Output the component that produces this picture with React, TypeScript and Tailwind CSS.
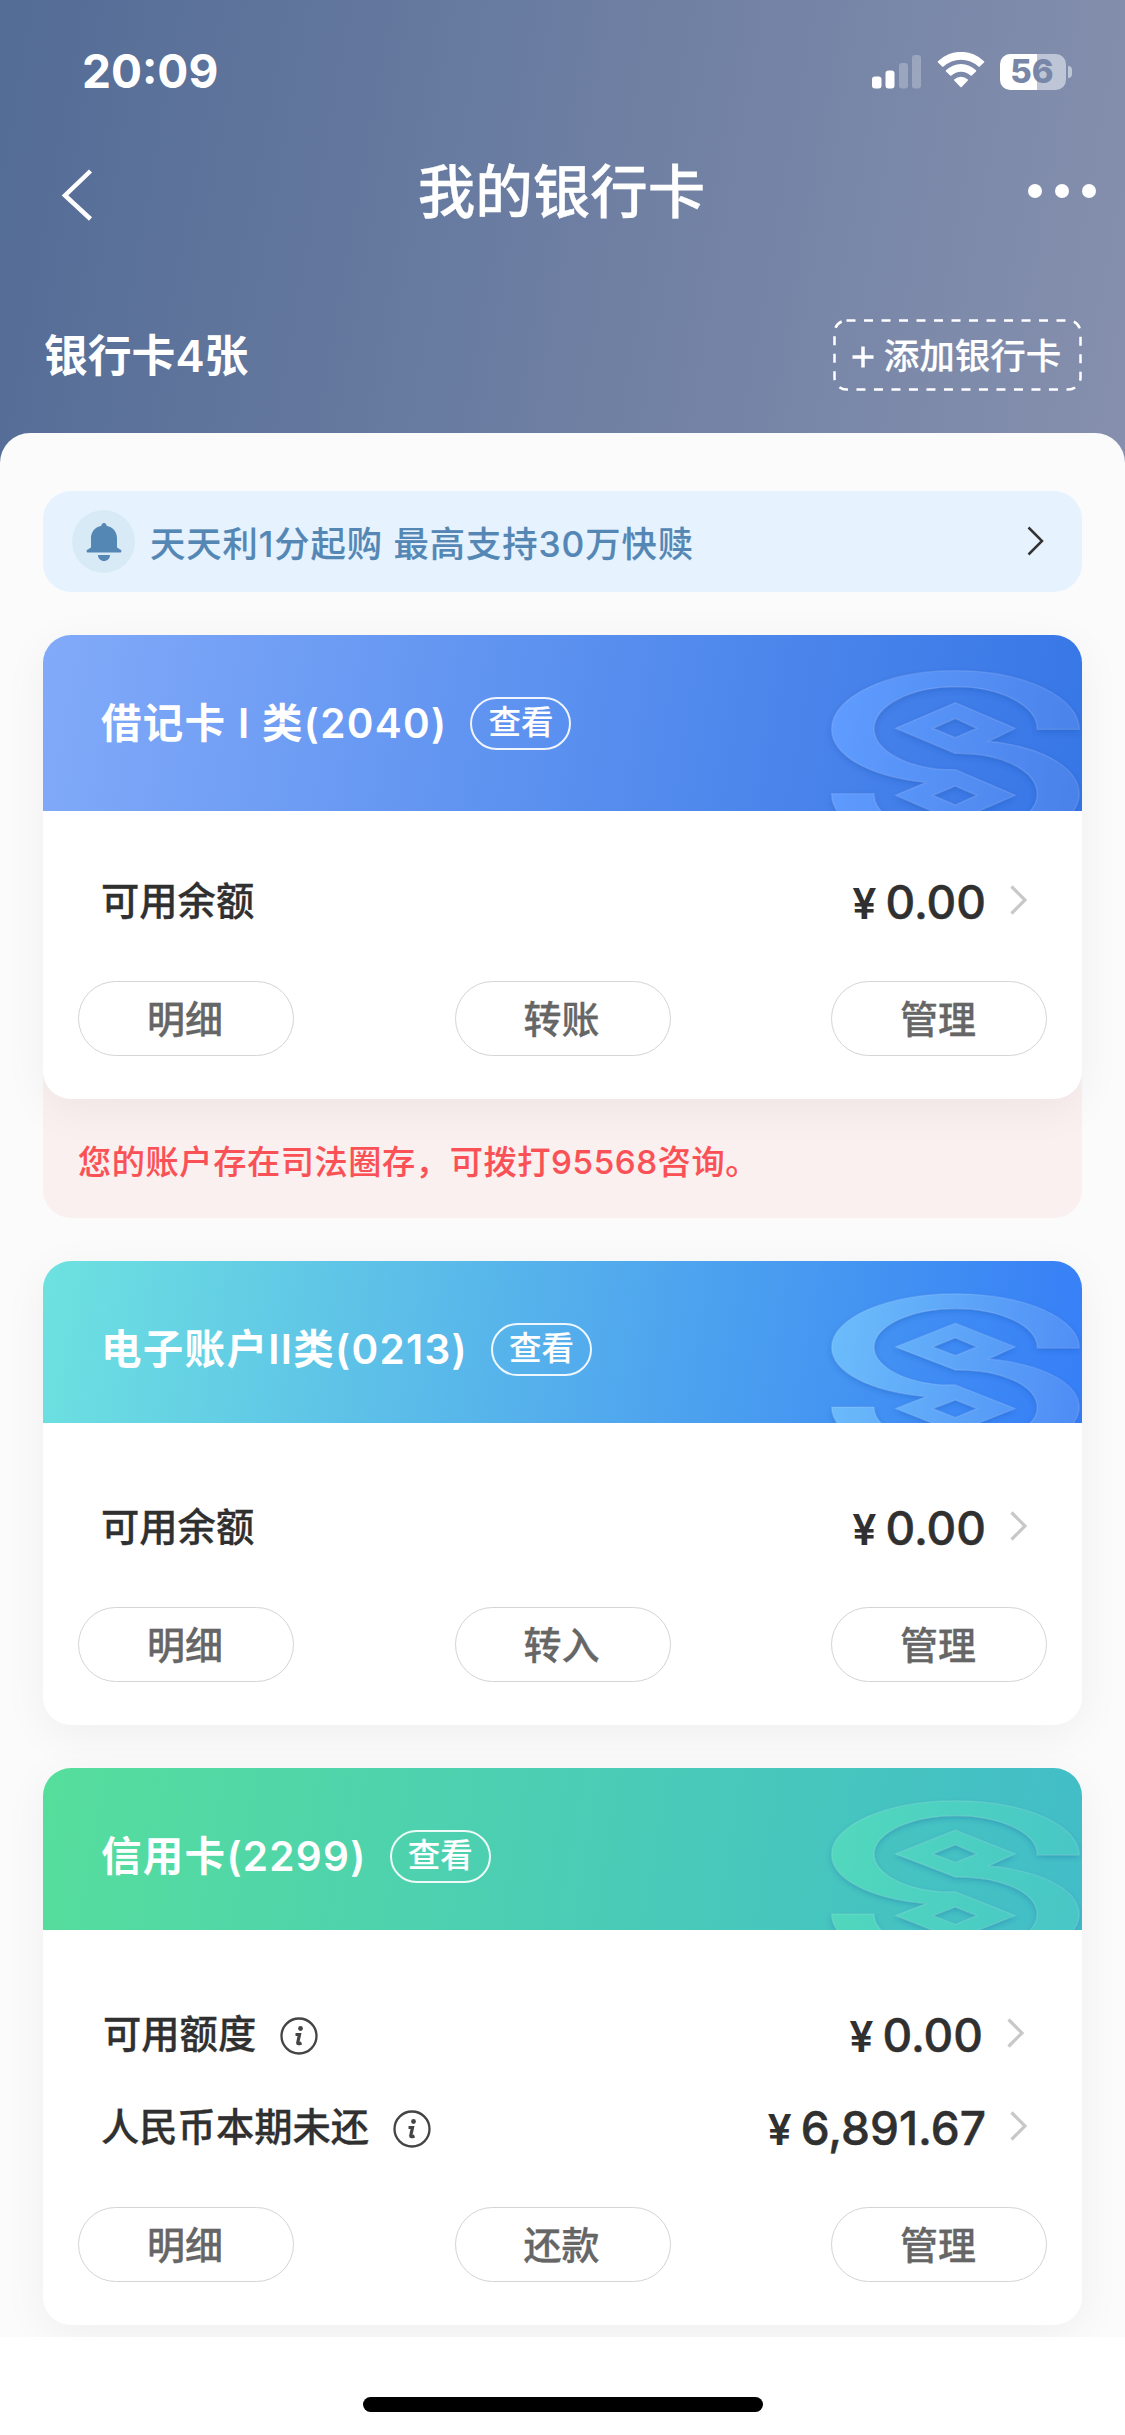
import type { ReactNode } from "react";

type Row = {
  label: string;
  amount: string;
  info?: boolean;
  className?: string;
};

type BankCardProps = {
  id: string;
  title: string;
  headerClass: string;
  bodyClass: string;
  mark: [string, string];
  rows: Row[];
  actions: string[];
};

const CARDS: BankCardProps[] = [
  {
    id: "debit",
    title: "借记卡 I 类(2040)",
    headerClass: "h-[176px] bg-[linear-gradient(100deg,#82aaf9_0%,#5a90ef_50%,#3676e6_100%)]",
    bodyClass: "pt-[44px]",
    mark: ["#5f9cff", "#4a82e9"],
    rows: [{ label: "可用余额", amount: "0.00" }],
    actions: ["明细", "转账", "管理"],
  },
  {
    id: "online",
    title: "电子账户II类(0213)",
    headerClass: "h-[162px] bg-[linear-gradient(100deg,#6de2e0_0%,#54aeec_50%,#367ef7_100%)]",
    bodyClass: "pt-[58px]",
    mark: ["#6bbcfb", "#4f8df5"],
    rows: [{ label: "可用余额", amount: "0.00" }],
    actions: ["明细", "转入", "管理"],
  },
  {
    id: "credit",
    title: "信用卡(2299)",
    headerClass: "h-[162px] bg-[linear-gradient(100deg,#56de9c_0%,#4bcdb5_50%,#42bdc8_100%)]",
    bodyClass: "pt-[58px]",
    mark: ["#52d8bd", "#48c6c6"],
    rows: [
      { label: "可用额度", amount: "0.00", info: true, className: "pl-[2px] pr-[3px]" },
      { label: "人民币本期未还", amount: "6,891.67", info: true },
    ],
    actions: ["明细", "还款", "管理"],
  },
];

function StatusBar() {
  return (
    <div className="flex h-[144px] items-center justify-between pl-[82px] pr-[53px]">
      <span className="-mt-[2px] text-[46px] font-bold leading-none">20:09</span>
      <div className="flex items-center">
        <svg width="50" height="34" viewBox="0 0 50 34" fill="#fff">
          <rect x="0" y="21.5" width="9.5" height="12" rx="3" />
          <rect x="13.5" y="15.5" width="9" height="18" rx="3" />
          <rect x="27" y="8" width="9" height="25.5" rx="3" opacity="0.25" />
          <rect x="40" y="0" width="9" height="33.5" rx="3" opacity="0.25" />
        </svg>
        <svg className="-mt-[4px] ml-[15px]" width="48" height="36" viewBox="0 0 48 36" fill="#fff">
          <path d="M1 9.200a33 33 0 0 1 46 0 .9.900 0 0 1 0 1.300l-4.200 4.100a1 1 0 0 1-1.300 0 25.500 25.500 0 0 0-35 0 1 1 0 0 1-1.300 0L1 10.500a.9.900 0 0 1 0-1.300z" />
          <path d="M9 18.200a21.500 21.500 0 0 1 30 0 .9.900 0 0 1 0 1.300l-4.200 4.100a1 1 0 0 1-1.200 0 14 14 0 0 0-19.200 0 1 1 0 0 1-1.200 0L9 19.500a.9.900 0 0 1 0-1.300z" />
          <path d="M17.200 27.400a10 10 0 0 1 13.600 0 .8.800 0 0 1 0 1.200l-6.200 6.300a.9.900 0 0 1-1.200 0L17.200 28.600a.8.800 0 0 1 0-1.200z" />
        </svg>
        <div className="-mt-[1px] ml-[15px] flex h-[36px] w-[66px] items-center justify-center rounded-[10px] bg-[linear-gradient(90deg,#fff_56%,#bdc5d6_56%)] pr-[2px]">
          <span className="text-[33px] font-extrabold leading-none text-[#7887a8]">56</span>
        </div>
        <div className="ml-[2px] h-[12px] w-[4px] rounded-r-full bg-[#bdc5d6]" />
      </div>
    </div>
  );
}

function Chevron({ className, width = 3.2 }: { className?: string; width?: number }) {
  return (
    <svg
      className={className}
      width="17"
      height="30"
      viewBox="0 0 17 30"
      fill="none"
      stroke="currentColor"
      strokeWidth={width}
    >
      <path d="M1.500 1.500 15 15 1.500 28.500" />
    </svg>
  );
}

function NavBar() {
  return (
    <div className="grid h-[98px] grid-cols-3 items-center">
      <svg className="ml-[61px] mt-[4px]" width="34" height="52" viewBox="0 0 34 52" fill="none" stroke="#fff" strokeWidth="4.500">
        <path d="M29.500 2 4 26.500l25.500 23.500" />
      </svg>
      <h1 className="-ml-[2px] whitespace-nowrap text-center text-[57.500px] font-medium leading-none [-webkit-text-stroke:0.300px]">
        我的银行卡
      </h1>
      <div className="-mt-[5px] flex justify-end gap-[13px] pr-[29px]">
        <i className="size-[14px] rounded-full bg-white" />
        <i className="size-[14px] rounded-full bg-white" />
        <i className="size-[14px] rounded-full bg-white" />
      </div>
    </div>
  );
}

function Summary() {
  return (
    <div className="flex items-center justify-between pl-[44px] pr-[43px] pt-[77px]">
      <span className="mt-[3px] text-[43.800px] font-semibold leading-none">银行卡4张</span>
      <button className="relative flex h-[72px] w-[249px] items-center justify-center gap-[10px] text-[35.500px] font-medium">
        <svg className="absolute inset-0" width="249" height="72" fill="none" stroke="#fff" strokeWidth="2.500">
          <rect x="1.500" y="1.500" width="246" height="69" rx="12" strokeDasharray="9 8.500" />
        </svg>
        <svg className="-ml-[2px] mt-[3px]" width="22" height="22" viewBox="0 0 22 22" stroke="#fff" strokeWidth="3.500">
          <path d="M11 0.500v21M0.500 11h21" />
        </svg>
        <span className="mt-[3px] [-webkit-text-stroke:0.200px]">添加银行卡</span>
      </button>
    </div>
  );
}

function Notice() {
  return (
    <div className="flex h-[101px] items-center rounded-[28px] bg-[#e6f3ff] pl-[29px] pr-[38px] text-[#5587b5]">
      <div className="flex size-[63px] items-center justify-center rounded-full bg-[#d9eaf7]">
        <svg width="36" height="38" viewBox="0 0 36 38" fill="currentColor">
          <path d="M18 0c1.500 0 2.600 1.200 2.600 2.700C26.800 4 31 8.800 31 15v9.500l4 2.600c.6.400.6 2.400-.4 2.400H1.400c-1 0-1-2-.4-2.400l4-2.600V15C5 8.800 9.200 4 15.400 2.700 15.400 1.200 16.500 0 18 0z" />
          <path d="M12 32h12c0 3.500-2.700 6-6 6s-6-2.500-6-6z" />
        </svg>
      </div>
      <span className="ml-[15px] mt-[7px] text-[35.300px] font-medium leading-none tracking-[0.950px] [-webkit-text-stroke:0.150px]">
        天天利1分起购 最高支持30万快赎
      </span>
      <Chevron className="ml-auto mt-[-2px] text-[#333]" width={2.5} />
    </div>
  );
}

// Embossed emblem, stretched to the height of the card header
function Emblem({ id, colors }: { id: string; colors: [string, string] }) {
  const gradient = `mark-${id}`;
  return (
    <svg
      className="absolute right-0 top-0 h-full w-[282px]"
      viewBox="0 14 846 528"
      preserveAspectRatio="none"
    >
      <defs>
        <linearGradient id={gradient} gradientUnits="userSpaceOnUse" x1="95" y1="300" x2="837" y2="420">
          <stop offset="0" stopColor={colors[0]} />
          <stop offset="1" stopColor={colors[1]} />
        </linearGradient>
        <filter id={`${gradient}-shadow`} x="-10%" y="-10%" width="120%" height="120%">
          <feDropShadow dx="0" dy="8" stdDeviation="9" floodColor="#0b3f9a" floodOpacity="0.24" />
        </filter>
      </defs>
      <g
        fill={`url(#${gradient})`}
        filter={`url(#${gradient}-shadow)`}
        fillRule="evenodd"
      >
        <path
          stroke="#fff"
          strokeOpacity="0.12"
          strokeWidth="4"
          d="M837 297A371 175 0 0 0 95 295C95 375 210 440 380 456L287 495 466 572 645 495 466 418C440 417 425 419 405 416A245 125 0 0 1 222 295A245 127 0 0 1 712 297ZM398 495 466 467 531 495 466 524Z"
        />
        <path
          stroke="#fff"
          strokeOpacity="0.12"
          strokeWidth="4"
          d="M287 294 466 217 645 294 565 333C725 350 837 410 837 492A371 174 0 0 1 95 490H222A245 125 0 0 0 712 492C712 420 605 367 466 369ZM398 294 466 322 531 294 466 264Z"
        />
      </g>
    </svg>
  );
}

function InfoIcon() {
  return (
    <svg className="ml-[24px] mt-[3px]" width="38" height="38" viewBox="0 0 38 38" fill="none" stroke="#444">
      <circle cx="19" cy="19" r="17.500" strokeWidth="2.300" />
      <circle cx="20.500" cy="11.500" r="2.400" fill="#444" stroke="none" />
      <path d="M15.500 17.500h4l-1.800 8.500q0 1.500 3.800 0" strokeWidth="3.200" />
    </svg>
  );
}

function BankCard({ id, title, headerClass, bodyClass, mark, rows, actions }: BankCardProps) {
  return (
    <section className="relative overflow-hidden rounded-[28px] bg-white">
      <div className={`relative overflow-hidden ${headerClass}`}>
        <Emblem id={id} colors={mark} />
        <div className="relative flex h-[177px] items-center pl-[58px] text-white">
          <span className="mt-[2px] text-[40.500px] font-semibold leading-none tracking-[1.300px]">{title}</span>
          <button className="ml-[23px] flex h-[53px] w-[101px] items-center justify-center rounded-full border-2 border-white/90 text-[32.500px] font-medium leading-none [-webkit-text-stroke:0.150px]">
            查看
          </button>
        </div>
      </div>
      <div className={bodyClass}>
        {rows.map((row) => (
          <div key={row.label} className={`flex h-[93px] items-center ${row.className ?? ""}`}>
            <span className="ml-[58px] text-[38.300px] font-medium leading-none text-[#303030] [-webkit-text-stroke:0.300px]">
              {row.label}
            </span>
            {row.info && <InfoIcon />}
            <span className="ml-auto flex items-baseline gap-[9px] leading-none text-[#303030]">
              <span className="text-[43px] font-semibold">¥</span>
              <span className="text-[46px] font-medium [-webkit-text-stroke:0.500px]">{row.amount}</span>
            </span>
            <Chevron className="ml-[24px] mr-[55px] mt-[-3px] text-[#c8c8c8]" />
          </div>
        ))}
        <div className="flex justify-between px-[35px] pb-[43px] pt-[33px]">
          {actions.map((action) => (
            <button
              key={action}
              className="flex h-[75px] w-[216px] items-center justify-center rounded-full border border-[#d4d4d4] pr-[2px] text-[38px] font-medium leading-none text-[#666] [-webkit-text-stroke:0.300px]"
            >
              {action}
            </button>
          ))}
        </div>
      </div>
    </section>
  );
}

function CardShadow({ children }: { children: ReactNode }) {
  return <div className="relative rounded-[28px] shadow-[0_10px_45px_rgba(0,0,0,0.05)]">{children}</div>;
}

export default function App() {
  const [debit, ...others] = CARDS;

  return (
    <div className="flex h-[2435px] w-[1125px] flex-col overflow-hidden bg-white font-[Inter,'Noto_Sans_CJK_SC',sans-serif]">
      <div className="flex flex-1 flex-col overflow-hidden bg-[linear-gradient(100deg,#536c96_0%,#8690ae_100%)] bg-[length:100%_480px] bg-no-repeat">
        <header className="h-[433px] text-white">
          <StatusBar />
          <NavBar />
          <Summary />
        </header>
        <main className="flex flex-1 flex-col gap-[43px] rounded-t-[30px] bg-[#fbfbfb] px-[43px] pt-[58px]">
          <Notice />
          <div>
            <CardShadow>
              <BankCard {...debit} />
            </CardShadow>
            <div className="-mt-[40px] flex h-[159px] items-center rounded-b-[28px] bg-[#faf0f0] pl-[35px] pt-[49px] text-[33.200px] font-medium leading-none tracking-[0.600px] text-[#fa5156] [-webkit-text-stroke:0.150px]">
              您的账户存在司法圈存，可拨打95568咨询。
            </div>
          </div>
          {others.map((card) => (
            <CardShadow key={card.id}>
              <BankCard {...card} />
            </CardShadow>
          ))}
        </main>
      </div>
      <footer className="flex h-[98px] justify-center bg-white pt-[60px]">
        <div className="h-[15px] w-[400px] rounded-full bg-black" />
      </footer>
    </div>
  );
}
